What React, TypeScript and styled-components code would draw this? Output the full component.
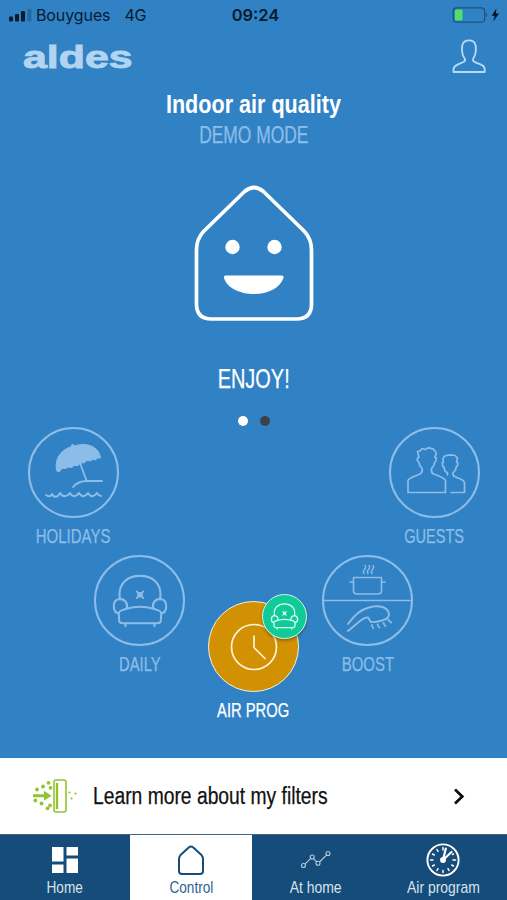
import React from 'react';
import styled, { createGlobalStyle } from 'styled-components';

const sky = '#3182c5';
const navy = '#154c79';
const pale = '#8cbde8';

const GlobalStyle = createGlobalStyle`
  * { box-sizing: border-box; }
  body { margin: 0; background: ${sky}; font-family: "Liberation Sans", Arial, sans-serif; }
  svg { display: block; flex: none; }
`;

const Screen = styled.main`
  width: 507px;
  height: 900px;
  display: flex;
  flex-direction: column;
  overflow: hidden;
  background: ${sky};
`;

/* Condensed lettering: the glyphs are narrowed around the chosen origin. */
const Label = styled.span<{
  $size: number; $squeeze: number; $color: string; $line?: number; $origin?: string; $weight?: number; $stroke?: number;
}>`
  display: block;
  flex: none;
  white-space: nowrap;
  font-size: ${p => p.$size}px;
  line-height: ${p => p.$line ?? 24}px;
  font-weight: ${p => p.$weight ?? 400};
  color: ${p => p.$color};
  transform: scaleX(${p => p.$squeeze});
  transform-origin: ${p => p.$origin ?? 'center'};
  -webkit-text-stroke: ${p => p.$stroke ?? 0.25}px currentColor;
`;

const StatusBar = styled.header`
  height: 30px;
  padding: 0 7px 0 9px;
  display: grid;
  grid-template-columns: 1fr auto 1fr;
  align-items: center;
  color: #071c30;
  font-family: Inter, sans-serif;
  font-size: 16px;
  line-height: 30px;
`;

const Carrier = styled.div`
  display: flex;
  align-items: center;
  gap: 4px;
  letter-spacing: -0.1px;
`;

const Network = styled.span`
  margin-left: 10px;
  letter-spacing: -0.4px;
`;

const Clock = styled.time`
  font-size: 16.5px;
  font-weight: 600;
  padding-left: 2px;
`;

const Power = styled.div`
  display: flex;
  justify-content: flex-end;
`;

const Brand = styled.div`
  height: 60px;
  padding: 9px 21px 0 23px;
  display: flex;
  justify-content: space-between;
  align-items: flex-start;
`;

const Summary = styled.section`
  height: 337px;
  display: flex;
  flex-direction: column;
  align-items: center;
`;

const HouseFace = styled.svg`
  margin: 33px 0 44px;
`;

const Dots = styled.div`
  display: flex;
  gap: 12px;
  margin-top: 25px;
`;

const Dot = styled.i<{ $active?: boolean }>`
  width: 10px;
  height: 10px;
  border-radius: 50%;
  background: ${p => (p.$active ? '#fff' : '#3d4248')};
`;

const Modes = styled.section`
  flex: 1;
`;

const OuterModes = styled.div`
  height: 128px;
  padding: 0 27px 0 28px;
  display: flex;
  justify-content: space-between;
`;

const InnerModes = styled.div`
  display: flex;
  justify-content: center;
  align-items: flex-start;
  gap: 23px;
`;

const Mode = styled.div<{ $drop?: number }>`
  width: 91px;
  margin-top: ${p => p.$drop ?? 0}px;
  display: flex;
  flex-direction: column;
  align-items: center;
  gap: 6px;
`;

const Disc = styled.div<{ $active?: boolean }>`
  position: relative;
  width: 91px;
  height: 91px;
  border: ${p => (p.$active ? '1.5px solid #f8f1df' : `2px solid ${pale}`)};
  border-radius: 50%;
  background: ${p => (p.$active ? '#d29003' : 'transparent')};
  display: grid;
  place-items: center;
`;

const Badge = styled.div`
  position: absolute;
  top: -8px;
  right: -9px;
  width: 45px;
  height: 45px;
  border: 1.5px solid #d5f6e8;
  border-radius: 50%;
  background: #0ecb98;
  box-shadow: 0 2px 3px rgba(60, 50, 0, 0.4);
  display: grid;
  place-items: center;
`;

const Banner = styled.a`
  height: 76px;
  padding: 0 42px 0 32px;
  background: #fff;
  display: flex;
  align-items: center;
`;

const BannerText = styled.div`
  flex: 1;
  padding-left: 15px;
`;

const Tabs = styled.nav`
  height: 66px;
  display: grid;
  grid-template-columns: 130px 122px 128px 127px;
  background: ${navy};
  border-top: 1px solid #42647f;
`;

const Tab = styled.div<{ $active?: boolean }>`
  padding-right: ${p => (p.$active ? 0 : 1)}px;
  display: flex;
  flex-direction: column;
  align-items: center;
  background: ${p => (p.$active ? '#fff' : 'transparent')};
`;

const TabIcon = styled.div`
  height: 42px;
  padding-top: 7px;
  display: grid;
  place-items: center;
`;

const stroke = { fill: 'none', strokeLinecap: 'round', strokeLinejoin: 'round' } as const;

const Signal = () => (
  <svg width="23" height="14" viewBox="0 0 23 14">
    <rect x="0" y="8.5" width="4" height="5" rx="1" fill="#071c30" />
    <rect x="6" y="6" width="4" height="7.5" rx="1" fill="#071c30" />
    <rect x="12" y="3" width="4" height="10.5" rx="1" fill="#071c30" />
    <rect x="18.5" y="1" width="4" height="12.5" rx="1" fill="#26689f" />
  </svg>
);

const Battery = () => (
  <svg width="48" height="16" viewBox="0 0 48 16">
    <rect x="1.2" y="0.8" width="31.5" height="14.4" rx="3.5" fill="none" stroke="#1b527f" strokeWidth="1.2" />
    <rect x="3" y="2.6" width="7.5" height="10.8" rx="1" fill="#4fe064" />
    <path d="M34.3 5.5q2 2.5 0 5z" fill="#1b527f" />
    <path d="M44.5 1.2 39.8 8.7h3L41.2 14.6 47 6.6h-3.2z" fill="#04121f" />
  </svg>
);

const Person = () => (
  <svg width="34" height="35" viewBox="0 0 34 35" {...stroke} stroke="#b9daf5" strokeWidth="1.8">
    <path d="M1.5 33V30Q2 27 6 25.3L11.5 23Q13.8 21.8 12.7 19.6C11 17.5 10.2 15 10 11.5 9.4 5 11.5 1.4 17 1.3S24.4 5 23.9 11.5C23.6 15 22.8 17.5 21.2 19.6 20.2 21.8 22 22.8 24 23.6L28.5 25.4Q32.5 27 32.7 30V33Z" />
  </svg>
);

const Parasol = () => (
  <svg width="87" height="87" viewBox="0 0 87 87" {...stroke} stroke={pale} strokeWidth="1.8">
    <path fill={pale} strokeWidth="1" d="M27 42C24 34 28 23 39 18.5L42 17.5 41.4 16 43 15.4 44 17C56 13 69 17 70.5 29Q67 28 65.5 31 62 29.5 60.5 32 57 30 54 34 50.5 32.5 48 36.5 44 35.5 41.5 38.5 38 37 35.5 39.5 31.5 38.5 30 42Z" />
    <path d="M50 34 56.5 51.5M43 58Q48 52 57 52H72" />
    <path strokeWidth="2" d="M16 66Q20 69 22 65Q24 69 28 67L30 64Q33 69 38 66L40 64Q43 69 47 66L49 64Q52 69 56 66L58 64Q61 69 65 66L67 64Q69 67 71 67" />
  </svg>
);

const Guests = () => (
  <svg width="87" height="87" viewBox="0 0 87 87" {...stroke} stroke={pale} strokeWidth="1.7">
    <path d="M17 63.5V51.5Q18 49.5 23 47.5L29.5 44.8Q31.5 43.5 31.2 39.5L29 37 28 33.5 26.2 31.5 26.8 28.5 28 28.2 26.5 22.5 29 22 31 19.5 34 20.5 37.5 18.8 42 19.8 44.5 22.5 45.3 24.5 43.8 28.2 45.3 28.8 45 32 43.7 33.5 42.5 37 40.5 39.5Q40 43.5 42 44.8L49 47.5Q53.5 49.5 54.5 51.5V63.5Z" />
    <path d="M60 63.5H73.5V53.5Q73 51.5 69.5 50L64 47.8Q61.5 46.5 62 43.8L64.5 41 65.2 38 66.8 36 66.5 33.5 65.5 33 66.5 29 64 26.5 60.5 25.8 56 26.3 53 27.5 51.8 30 52.5 33.2 51.2 34 51.8 37.5 53 38.3 54 42 56.5 44V46" />
  </svg>
);

const Armchair = ({ size, color, width }: { size: number; color: string; width: number }) => (
  <svg width={size} height={size} viewBox="0 0 60 60" {...stroke} stroke={color} strokeWidth={width}>
    <path d="M9 27C7 12 17 4 30 4S53 12 51 27" />
    <path d="M8 43C1 41 1 29 9 28C15 28 18 33 16 38C25 35.5 35 35.5 44 38C42 33 45 28 51 28C59 29 59 41 52 43L51.5 51Q51 53 48 53H12Q9 53 8.5 51ZM8 43Q8 40 16 38M52 43Q52 40 44 38M15 53V56M45 53V56" />
    <path d="M26.5 20 33.5 27M33.5 20 26.5 27M28 21.5H32V25.5H28Z" strokeWidth={width * 0.85} />
  </svg>
);

const Boost = () => (
  <svg width="87" height="87" viewBox="0 0 87 87" {...stroke} stroke={pale} strokeWidth="1.6">
    <path d="M0 43.5H87" strokeWidth="1.3" />
    <path d="M29.5 20.5H57.5V33.5Q57.5 37 54 37H33Q29.5 37 29.5 33.5ZM29 25H26M58 25H61" />
    <path strokeWidth="1.3" d="M40 16.5Q38.5 14.5 40.5 12.5T41 8.5M44 16.5Q42.5 14.5 44.5 12.5T45 8.5M48 16.5Q46.5 14.5 48.5 12.5T49 8.5" />
    <path strokeWidth="1.9" d="M24 67Q34 53 45 50.5C55 47.5 64 50 65 57Q65.5 61.5 58 63.5 51 65.5 47 65L44 60.5Q41 60 36 64L24 74" />
    <path strokeWidth="1.8" d="M48 68V69M53.5 67.5 54 68.5M59.5 66 60 67M64.5 63 65.5 64M49 70.5V71M55 70 55.3 70.5M61 68.5 61.5 69M66.5 65 67 65.5" />
  </svg>
);

const ProgramClock = () => (
  <svg width="50" height="50" viewBox="0 0 50 50" {...stroke} stroke="#fff3d6" strokeWidth="1.7">
    <circle cx="25" cy="25" r="22.5" />
    <path d="M25 14V25.5L36 36.5" />
  </svg>
);

const Filter = () => (
  <svg width="46" height="34" viewBox="0 0 46 34" fill="#94c332">
    <path d="M22 3Q22 1 24 1H32Q34 1 34 3V31Q34 33 32 33H24Q22 33 22 31Z" fill="none" stroke="#94c332" strokeWidth="1.6" />
    <path d="M25 4V30" stroke="#94c332" strokeWidth="2.4" />
    <path d="M1 15.3H12V11.8L19.5 16.8 12 21.8V18.3H1Z" />
    {[[16.5, 3.8], [11, 7.5], [5, 10.5], [18.5, 8.8], [3.3, 21.5], [9.5, 24.5], [18, 26.5], [15.5, 29.3]].map(([x, y]) => (
      <circle key={`${x}-${y}`} cx={x} cy={y} r="1.9" />
    ))}
    {[[37.5, 13.5], [43.5, 14.5], [39.5, 19.5]].map(([x, y]) => (
      <circle key={`${x}-${y}`} cx={x} cy={y} r="1.1" />
    ))}
  </svg>
);

const Chevron = () => (
  <svg width="12" height="17" viewBox="0 0 12 17" fill="none" stroke="#0b0b0b" strokeWidth="2.7">
    <path d="M2 1.5 9.3 8.5 2 15.5" />
  </svg>
);

const HomeTiles = () => (
  <svg width="28" height="28" viewBox="0 0 28 28" fill="#fff">
    <path d="M1 1H12.5V15.5H1ZM15.5 1H27V9.5H15.5ZM1 18.5H12.5V27H1ZM15.5 12.5H27V27H15.5Z" />
  </svg>
);

const SmallHouse = () => (
  <svg width="28" height="30" viewBox="0 0 28 30" {...stroke} stroke={navy} strokeWidth="2">
    <path d="M12 2.2Q14 .8 16 2.2L24.5 10Q26 12 26 14V26Q26 29 23 29H5Q2 29 2 26V14Q2 12 3.5 10Z" />
  </svg>
);

const Trend = () => (
  <svg width="30" height="19" viewBox="0 0 30 19" fill="none" stroke="#b7cad8" strokeWidth="1.1">
    <path d="M3.7 14.3 9.8 8.4M12.5 8.6 15.8 12.2M18.5 12 26 4.6" />
    <circle cx="2.5" cy="15.5" r="2" /><circle cx="11.2" cy="7" r="2" />
    <circle cx="17" cy="13.3" r="2" /><circle cx="27" cy="3.5" r="2" />
  </svg>
);

const DialClock = () => (
  <svg width="34" height="34" viewBox="0 0 34 34" {...stroke} stroke="#fff" strokeWidth="1.9">
    <circle cx="17" cy="17" r="15.6" />
    <path strokeWidth="1.5" d="M17 27.5V29.5M4.5 17H7M27 17H29.5M6.5 11 8.3 12M11 6.5 12 8.3M27.5 11 26.5 11.5M27.5 23 25.7 22M23 27.5 22 25.7M11 27.5 12 25.7M6.5 23 8.3 22M17 4.5V7" />
    <path d="M17 17 19.8 5.5M17 17 25.5 9" strokeWidth="2.2" />
    <circle cx="17" cy="17" r="2" fill="#fff" />
  </svg>
);

export default function App() {
  return (
    <Screen>
      <GlobalStyle />
      <StatusBar>
        <Carrier><Signal /><span>Bouygues</span><Network>4G</Network></Carrier>
        <Clock>09:24</Clock>
        <Power><Battery /></Power>
      </StatusBar>
      <Brand>
        <Label $size={32} $line={36} $squeeze={1.34} $origin="left" $weight={700} $stroke={0.9} $color="#b2d4f1">aldes</Label>
        <Person />
      </Brand>
      <Summary>
        <Label $size={26} $line={28} $squeeze={0.83} $weight={700} $stroke={0} $color="#fff">Indoor air quality</Label>
        <Label $size={23.5} $line={34} $squeeze={0.74} $color={pale}>DEMO MODE</Label>
        <HouseFace width="120" height="138" viewBox="0 0 120 138" fill="none">
          <path d="M50.5 6.5Q60 -1.5 69.5 6.5L110.5 46.5Q117.5 54 117.5 65V119Q117.5 134 102.5 134H17.5Q2.5 134 2.5 119V65Q2.5 54 9.5 46.5Z" stroke="#fff" strokeWidth="3.7" />
          <circle cx="38.5" cy="62" r="7.2" fill="#fff" />
          <circle cx="80.5" cy="62" r="7.2" fill="#fff" />
          <path d="M31.5 90.5H88Q90 90.5 89.5 93C86 103 74 109 60 109S33 103 30 93Q29.5 90.5 31.5 90.5Z" fill="#fff" />
        </HouseFace>
        <Label $size={27.5} $line={24} $squeeze={0.725} $color="#fff">ENJOY!</Label>
        <Dots><Dot $active /><Dot /></Dots>
      </Summary>
      <Modes>
        <OuterModes>
          <Mode><Disc><Parasol /></Disc><Label $size={20.5} $squeeze={0.73} $color={pale}>HOLIDAYS</Label></Mode>
          <Mode><Disc><Guests /></Disc><Label $size={20.5} $squeeze={0.71} $color={pale}>GUESTS</Label></Mode>
        </OuterModes>
        <InnerModes>
          <Mode><Disc><Armchair size={58} color={pale} width={2.1} /></Disc><Label $size={20.5} $squeeze={0.72} $color={pale}>DAILY</Label></Mode>
          <Mode $drop={46}>
            <Disc $active>
              <ProgramClock />
              <Badge><Armchair size={29} color="#d9fff1" width={2.7} /></Badge>
            </Disc>
            <Label $size={20.5} $squeeze={0.72} $color="#fff">AIR PROG</Label>
          </Mode>
          <Mode><Disc><Boost /></Disc><Label $size={20.5} $squeeze={0.73} $color={pale}>BOOST</Label></Mode>
        </InnerModes>
      </Modes>
      <Banner>
        <Filter />
        <BannerText><Label $size={23} $squeeze={0.838} $origin="left" $color="#111" $line={28}>Learn more about my filters</Label></BannerText>
        <Chevron />
      </Banner>
      <Tabs>
        <Tab><TabIcon><HomeTiles /></TabIcon><Label $size={17} $line={21} $squeeze={0.8} $color="#d6e3ec" $stroke={0}>Home</Label></Tab>
        <Tab $active><TabIcon><SmallHouse /></TabIcon><Label $size={17} $line={21} $squeeze={0.8} $color="#2b6394" $stroke={0}>Control</Label></Tab>
        <Tab><TabIcon><Trend /></TabIcon><Label $size={17} $line={21} $squeeze={0.82} $color="#d6e3ec" $stroke={0}>At home</Label></Tab>
        <Tab><TabIcon><DialClock /></TabIcon><Label $size={17} $line={21} $squeeze={0.82} $color="#d6e3ec" $stroke={0}>Air program</Label></Tab>
      </Tabs>
    </Screen>
  );
}
